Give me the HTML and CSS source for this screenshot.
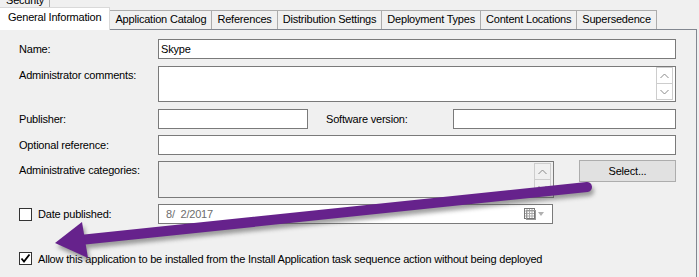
FILE: index.html
```html
<html lang="en">
  <head>
    <meta charset="utf-8">
    <title>Skype Properties</title>
    <link rel="stylesheet" href="styles.css">
  </head>

  <body>
    <div class="window">
      <div class="tab-security"><span>Security</span></div>

      <div class="tabs">
        <div class="tab active">General Information</div>
        <div class="tab">Application Catalog</div>
        <div class="tab">References</div>
        <div class="tab">Distribution Settings</div>
        <div class="tab">Deployment Types</div>
        <div class="tab">Content Locations</div>
        <div class="tab">Supersedence</div>
      </div>

      <div class="panel">
        <div class="row row-name">
          <label class="label">Name:</label>
          <div class="field text">Skype</div>
        </div>

        <div class="row row-comments">
          <label class="label label-top">Administrator comments:</label>
          <div class="field area">
            <div class="spin">
              <div class="spin-btn"><svg width="9" height="6" viewBox="0 0 9 6"><polyline points="0.5,5 4.5,1 8.5,5" /></svg></div>
              <div class="spin-btn"><svg width="9" height="6" viewBox="0 0 9 6"><polyline points="0.5,1 4.5,5 8.5,1" /></svg></div>
            </div>
          </div>
        </div>

        <div class="row row-publisher">
          <label class="label">Publisher:</label>
          <div class="field text publisher"></div>
          <label class="label-version">Software version:</label>
          <div class="field text version"></div>
        </div>

        <div class="row row-optional">
          <label class="label">Optional reference:</label>
          <div class="field text"></div>
        </div>

        <div class="row row-categories">
          <label class="label label-top">Administrative categories:</label>
          <div class="field area categories">
            <div class="spin">
              <div class="spin-btn"><svg width="9" height="6" viewBox="0 0 9 6"><polyline points="0.5,5 4.5,1 8.5,5" /></svg></div>
              <div class="spin-btn"><svg width="9" height="6" viewBox="0 0 9 6"><polyline points="0.5,1 4.5,5 8.5,1" /></svg></div>
            </div>
          </div>
          <div class="button">Select...</div>
        </div>

        <div class="row row-date">
          <div class="check-label">
            <span class="checkbox"></span>
            <span>Date published:</span>
          </div>
          <div class="field text date">
            <span class="date-value">8/&nbsp; 2/2017</span>
            <svg class="calendar" width="22" height="12" viewBox="0 0 22 12">
              <rect x="0.5" y="0.5" width="10" height="10" fill="#fff" stroke="#777" />
              <path d="M3 1v9M5.5 1v9M8 1v9M1 3h9M1 5.5h9M1 8h9" stroke="#aaa" stroke-width="1" />
              <rect x="2.5" y="2.5" width="9" height="9" fill="none" stroke="#999" />
              <polygon points="14,4 20,4 17,8" fill="#b0b0b0" />
            </svg>
          </div>
        </div>

        <div class="row row-allow">
          <div class="check-label">
            <span class="checkbox">
              <svg width="11" height="11" viewBox="0 0 11 11"><polyline points="1.5,5.5 4,8.5 9.5,1.5" /></svg>
            </span>
            <span>Allow this application to be installed from the Install Application task sequence action without being deployed</span>
          </div>
        </div>
      </div>

      <!-- annotation arrow drawn over the dialog -->
      <svg class="arrow" width="699" height="277" viewBox="0 0 699 277">
        <defs>
          <filter id="shadow" x="-10%" y="-50%" width="120%" height="200%">
            <feGaussianBlur stdDeviation="2" />
          </filter>
        </defs>
        <g transform="translate(2,4)" fill="#555" stroke="#555" opacity="0.55" filter="url(#shadow)">
          <line x1="587" y1="187" x2="80" y2="240" stroke-width="10" stroke-linecap="round" />
          <polygon points="55,243 82,222 88,258" stroke="none" />
        </g>
        <g fill="#66228c" stroke="#66228c">
          <line x1="587" y1="187" x2="80" y2="240" stroke-width="10" stroke-linecap="round" />
          <polygon points="55,243 82,222 88,258" stroke="none" />
        </g>
      </svg>
    </div>
  </body>
</html>
```

FILE: styles.css
```css
* {
  box-sizing: border-box;
}

body {
  margin: 0;
  background-color: #f0f0f0;
  font-family: "Liberation Sans", Arial, sans-serif;
  font-size: 11px;
  letter-spacing: -0.2px;
  color: #000;
  overflow: hidden;
}

.window {
  position: relative;
  width: 699px;
  height: 277px;
  margin-left: -2px;
}

/* tabs */

.tab-security {
  width: 52px;
  height: 8px;
  overflow: hidden;
  border: 1px solid #acacac;
  border-top: none;
  border-bottom: none;
  padding-left: 7px;
}

.tab-security span {
  display: block;
  margin-top: -6px;
  line-height: 13px;
}

.tabs {
  display: flex;
  align-items: flex-end;
  height: 21px;
  position: relative;
  z-index: 1;
}

.tab {
  height: 19px;
  line-height: 17px;
  padding: 0 5px;
  border: 1px solid #acacac;
  border-bottom: none;
  border-left: none;
  background-color: #f0f0f0;
  white-space: nowrap;
}

.tab.active {
  height: 23px;
  margin-bottom: -1px;
  padding: 0 8px 0 9px;
  line-height: 19px;
  background-color: #fff;
  border-left: 1px solid #acacac;
  border-color: #d9d9d9;
}

/* panel */

.panel {
  height: 260px;
  border: 1px solid #828790;
  border-bottom: none;
  padding: 9px 20px 0 19px;
  background-color: #f0f0f0;
}

.row {
  display: flex;
  align-items: center;
}

.row-name { margin-bottom: 7px; }
.row-comments { margin-bottom: 7px; align-items: flex-start; }
.row-publisher { margin-bottom: 6px; }
.row-optional { margin-bottom: 6px; }
.row-categories { margin-bottom: 6px; align-items: flex-start; }
.row-date { margin-bottom: 28px; }

.label {
  width: 140px;
  flex: none;
  padding-left: 1px;
}

.label-top {
  padding-top: 3px;
}

.field {
  background-color: #fff;
  border: 1px solid #7a7a7a;
}

.text {
  flex: 1;
  height: 20px;
  line-height: 18px;
  padding-left: 2px;
}

.area {
  flex: 1;
  height: 36px;
  display: flex;
  justify-content: flex-end;
  padding: 0 2px 0 0;
}

.publisher {
  flex: none;
  width: 150px;
}

.label-version {
  width: 145px;
  padding-left: 18px;
  flex: none;
}

.categories {
  flex: none;
  width: 396px;
  height: 37px;
  background-color: #f0f0f0;
  padding-top: 1px;
}

.spin {
  width: 17px;
  display: flex;
  flex-direction: column;
}

.spin-btn {
  height: 17px;
  border: 1px solid #cdcdcd;
  background-color: #fff;
  display: flex;
  align-items: center;
  justify-content: center;
}

.spin-btn + .spin-btn {
  margin-top: -1px;
}

.categories .spin-btn {
  background-color: #f0f0f0;
}

.spin-btn svg polyline {
  fill: none;
  stroke: #8a8a8a;
  stroke-width: 1;
}

.button {
  margin-left: 25px;
  width: 97px;
  height: 22px;
  line-height: 20px;
  text-align: center;
  background-color: #e1e1e1;
  border: 1px solid #adadad;
  margin-top: -1px;
}

.check-label {
  display: flex;
  align-items: center;
  width: 140px;
  flex: none;
  white-space: nowrap;
}

.checkbox {
  width: 13px;
  height: 13px;
  margin-left: 1px;
  margin-right: 6px;
  border: 1px solid #333;
  background-color: #fff;
  display: flex;
  align-items: center;
  justify-content: center;
}

.checkbox svg polyline {
  fill: none;
  stroke: #000;
  stroke-width: 1.8;
}

.date {
  flex: none;
  width: 395px;
  display: flex;
  align-items: center;
  padding-left: 7px;
  padding-right: 6px;
}

.date-value {
  flex: 1;
  color: #6d6d6d;
}

.calendar {
  display: block;
}

/* annotation */

.arrow {
  position: absolute;
  left: 2px;
  top: 0;
  pointer-events: none;
  z-index: 2;
}
```
